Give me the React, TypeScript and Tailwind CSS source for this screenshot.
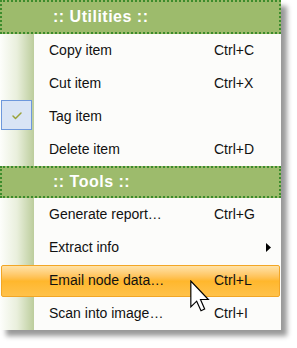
import { Check } from 'lucide-react';

type Item = {
  label: string;
  shortcut?: string;
  checked?: boolean;
  submenu?: boolean;
  active?: boolean;
};

const utilities: Item[] = [
  { label: 'Copy item', shortcut: 'Ctrl+C' },
  { label: 'Cut item', shortcut: 'Ctrl+X' },
  { label: 'Tag item', checked: true },
  { label: 'Delete item', shortcut: 'Ctrl+D' },
];

const tools: Item[] = [
  { label: 'Generate report…', shortcut: 'Ctrl+G' },
  { label: 'Extract info', submenu: true },
  { label: 'Email node data…', shortcut: 'Ctrl+L', active: true },
  { label: 'Scan into image…', shortcut: 'Ctrl+I' },
];

function Header({ title, height }: { title: string; height: string }) {
  return (
    <div
      className={`${height} flex items-center border-2 border-dotted border-[#3c8c2c] bg-[#9dbb6c] pl-[51px] text-[16px] font-bold tracking-[0.5px] text-white`}
    >
      {title}
    </div>
  );
}

function Row({ item }: { item: Item }) {
  return (
    <div className="relative flex h-[33px] items-center">
      {/* gutter */}
      <div className="relative h-full w-[34px] bg-gradient-to-r from-[#fdfefb] via-[#e9efdc] to-[#bccd9c]">
        {item.checked && (
          <div className="absolute left-[1px] top-0 flex h-[30px] w-[31px] items-center justify-center border border-[#6e98dc] bg-[#d9e4f5]">
            <Check className="mt-[2px] h-[12px] w-[12px] text-[#9aa23a]" strokeWidth={3} />
          </div>
        )}
      </div>
      {item.active && (
        <div className="absolute top-[1px] bottom-0 left-[1px] right-[1px] rounded-[2px] border border-[#f2a626] bg-gradient-to-b from-[#ffe2a6] via-[#ffb72c] to-[#ffc24a]" />
      )}
      <div className="relative flex-1 pl-[15px] text-[#111]">{item.label}</div>
      <div className="relative flex w-[67px] items-center text-[#111]">
        {item.shortcut}
        {item.submenu && (
          <svg className="ml-[52px]" width="5" height="9" viewBox="0 0 5 9">
            <path d="M0 0 L5 4.5 L0 9 Z" fill="#000" />
          </svg>
        )}
      </div>
    </div>
  );
}

export default function App() {
  return (
    <div className="relative h-[348px] w-[297px] bg-white font-['Liberation_Sans',Arial,sans-serif] text-[14px]">
      <div className="w-[281px] bg-[#fcfcfa] shadow-[6px_6px_5px_rgba(0,0,0,0.4)]">
        <Header title=":: Utilities ::" height="h-[34px]" />
        {utilities.map((item) => (
          <Row key={item.label} item={item} />
        ))}
        <Header title=":: Tools ::" height="h-[32px]" />
        {tools.map((item) => (
          <Row key={item.label} item={item} />
        ))}
      </div>

      {/* mouse pointer */}
      <svg className="absolute left-[190px] top-[280px]" width="20" height="32" viewBox="0 0 12 19">
        <path
          d="M0.5 0.5 L0.5 16 L4 12.6 L6.6 18.3 L8.8 17.3 L6.3 11.6 L11 11.6 Z"
          fill="#fff"
          stroke="#000"
          strokeWidth="0.7"
          strokeLinejoin="miter"
        />
      </svg>
    </div>
  );
}
